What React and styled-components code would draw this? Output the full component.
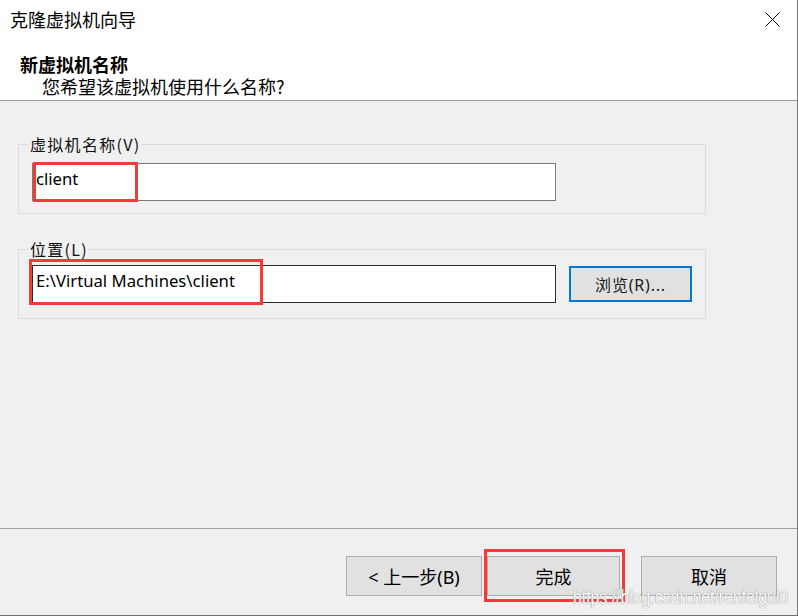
import React from 'react';
import styled, { createGlobalStyle } from 'styled-components';

const GlobalStyle = createGlobalStyle`
  html, body { margin: 0; padding: 0; background: #f0f0f0; }
  body {
    width: 798px; height: 616px; overflow: hidden;
    font-family: "Noto Sans", "Noto Sans CJK SC", sans-serif;
  }
`;

const cjk = `"Noto Sans CJK SC", "Noto Sans", sans-serif`;
const latin = `"Noto Sans", "Noto Sans CJK SC", sans-serif`;

const Window = styled.div`
  width: 798px;
  height: 616px;
  box-sizing: border-box;
  border-right: 1px solid #767676;
  display: flex;
  flex-direction: column;
  background: #f0f0f0;
`;

const Header = styled.header`
  height: 101px;
  box-sizing: border-box;
  background: #fff;
  border-bottom: 1px solid #a0a0a0;
  display: flex;
  flex-direction: column;
`;

const TitleRow = styled.div`
  display: flex;
  justify-content: space-between;
  align-items: flex-start;
  padding: 10px 17px 0 10px;
`;

const Title = styled.div`
  font-family: ${cjk};
  font-size: 18px;
  line-height: 18px;
  color: #000;
`;

const CloseButton = styled.button`
  display: block;
  width: 15px;
  height: 15px;
  margin-top: 2px;
  padding: 0;
  border: 0;
  background: none;
  svg { display: block; }
`;

const Heading = styled.div`
  margin: 27px 0 0 20px;
  font-family: ${cjk};
  font-weight: 700;
  font-size: 18px;
  line-height: 18px;
  color: #000;
`;

const Subheading = styled.div`
  margin: 4px 0 0 42px;
  font-family: ${cjk};
  font-size: 18px;
  line-height: 18px;
  color: #000;
`;

const Body = styled.main`
  flex: 1;
  display: flex;
  flex-direction: column;
  padding: 43px 0 0 18px;
`;

const GroupBox = styled.section`
  width: 688px;
  height: 70px;
  box-sizing: border-box;
  border: 1px solid #dcdcdc;
  margin-top: ${p => p.$gap || 0}px;
`;

const Legend = styled.div`
  width: fit-content;
  margin: -10px 0 0 10px;
  padding: 0 1px;
  background: #f0f0f0;
  font-family: ${cjk};
  font-size: 16px;
  letter-spacing: 1.3px;
  line-height: 18px;
  color: #111;
`;

const FieldRow = styled.div`
  display: flex;
  align-items: center;
  margin: ${p => p.$top}px 0 0 13px;
`;

const InputWrap = styled.div`
  position: relative;
  display: flex;
`;

const TextInput = styled.input`
  width: 524px;
  height: 38px;
  box-sizing: border-box;
  border: 1px solid ${p => (p.$focused ? '#2b2b2b' : '#7a7a7a')};
  background: #fff;
  padding: 0 0 8px 3px;
  margin: 0;
  font-family: ${latin};
  font-size: 16.7px;
  color: #000;
  outline: none;
`;

const Annotation = styled.span`
  position: absolute;
  left: ${p => p.$l}px;
  top: ${p => p.$t}px;
  width: ${p => p.$w}px;
  height: ${p => p.$h}px;
  box-sizing: border-box;
  border: 3px solid #f23b3b;
  pointer-events: none;
`;

const BrowseButton = styled.button`
  width: 123px;
  height: 36px;
  margin-left: 13px;
  box-sizing: border-box;
  background: #e1e1e1;
  border: 2px solid #0078d7;
  padding: 0;
  font-family: ${latin};
  font-size: 16px;
  letter-spacing: 0.8px;
  color: #1a1a1a;
`;

const Footer = styled.footer`
  position: relative;
  height: 88px;
  box-sizing: border-box;
  border-top: 1px solid #a0a0a0;
  border-bottom: 1px solid #6e6e6e;
  display: flex;
  justify-content: flex-end;
  align-items: flex-start;
  padding: 27px 20px 0 0;
`;

const ButtonSlot = styled.div`
  position: relative;
  margin-left: ${p => p.$gap || 0}px;
`;

const DialogButton = styled.button`
  display: block;
  width: ${p => p.$w || 136}px;
  height: 40px;
  box-sizing: border-box;
  background: #e1e1e1;
  border: 1px solid #adadad;
  padding: 0;
  font-family: ${latin};
  font-size: 18px;
  color: #000;
`;

const Watermark = styled.div`
  position: absolute;
  left: 573px;
  top: 58px;
  font-family: "Liberation Sans", Arial, sans-serif;
  font-size: 20px;
  line-height: 20px;
  white-space: nowrap;
  color: #fbfbfb;
  text-shadow: 0 0 1px #8c8c8c, 0 0 1px #9a9a9a;
  transform: scaleX(0.79);
  transform-origin: left top;
  pointer-events: none;
`;

const CloseIcon = () => (
  <svg width="15" height="15" viewBox="0 0 15 15">
    <path d="M0.5 0.5 L14.5 14.5 M14.5 0.5 L0.5 14.5" stroke="#000" strokeWidth="1" fill="none" />
  </svg>
);

export default function App() {
  return (
    <>
      <GlobalStyle />
      <Window>
        <Header>
          <TitleRow>
            <Title>克隆虚拟机向导</Title>
            <CloseButton aria-label="关闭"><CloseIcon /></CloseButton>
          </TitleRow>
          <Heading>新虚拟机名称</Heading>
          <Subheading>您希望该虚拟机使用什么名称?</Subheading>
        </Header>
        <Body>
          <GroupBox>
            <Legend>虚拟机名称(V)</Legend>
            <FieldRow $top={10}>
              <InputWrap>
                <TextInput defaultValue="client" />
                <Annotation $l={1} $t={-1} $w={105} $h={40} />
              </InputWrap>
            </FieldRow>
          </GroupBox>
          <GroupBox $gap={35}>
            <Legend>位置(L)</Legend>
            <FieldRow $top={7}>
              <InputWrap>
                <TextInput $focused defaultValue="E:\Virtual Machines\client" />
                <Annotation $l={-3} $t={-6} $w={234} $h={46} />
              </InputWrap>
              <BrowseButton>浏览(R)...</BrowseButton>
            </FieldRow>
          </GroupBox>
        </Body>
        <Footer>
          <ButtonSlot>
            <DialogButton>&lt; 上一步(B)</DialogButton>
          </ButtonSlot>
          <ButtonSlot $gap={5}>
            <DialogButton $w={133}>完成</DialogButton>
            <Annotation $l={-3} $t={-7} $w={141} $h={53} />
          </ButtonSlot>
          <ButtonSlot $gap={21}>
            <DialogButton>取消</DialogButton>
          </ButtonSlot>
          <Watermark>https://blog.csdn.net/renfeigui0</Watermark>
        </Footer>
      </Window>
    </>
  );
}
